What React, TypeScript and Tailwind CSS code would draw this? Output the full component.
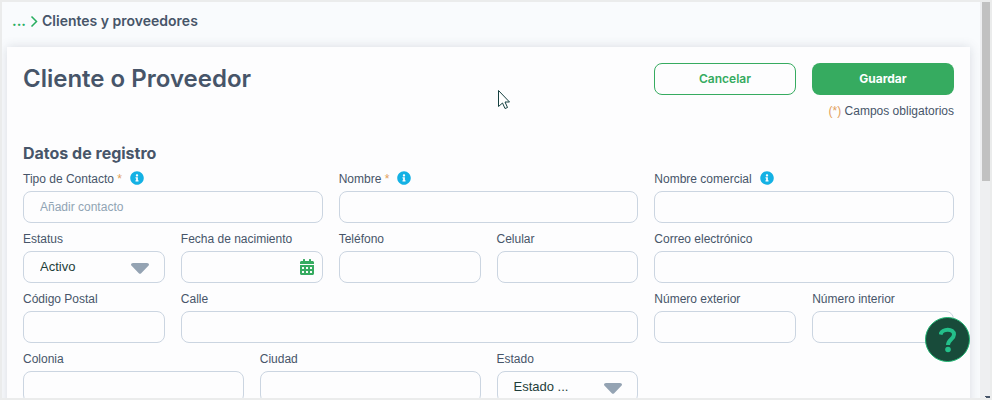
import type { ReactNode } from "react";
import { FaCalendarAlt, FaInfoCircle } from "react-icons/fa";

const heading = "font-['Inter',sans-serif] text-[#475569]";
const box =
  "h-8 w-full rounded-lg border border-[#cbd5e1] bg-transparent px-4 outline-none placeholder:text-[#90a4b4]";

type FieldProps = {
  id: string;
  label: string;
  span: string;
  required?: boolean;
  info?: boolean;
  children?: ReactNode;
};

function Field({ id, label, span, required, info, children }: FieldProps) {
  return (
    <div className={span}>
      <div className="flex h-6 items-center">
        <label htmlFor={id}>
          {label}
          {required && <span className="text-[#e2a05b]"> *</span>}
        </label>
        {info && <FaInfoCircle className="mb-0.5 ml-2 size-3.5 text-[#14b1e4]" />}
      </div>
      {children ?? <input id={id} type="text" className={box} />}
    </div>
  );
}

function Dropdown({ id, option }: { id: string; option: string }) {
  return (
    <div className="relative">
      <select id={id} className={`${box} block appearance-none text-[13px] text-[#1f3d3a]`}>
        <option>{option}</option>
      </select>
      <svg
        viewBox="0 0 18 11"
        className="pointer-events-none absolute top-3 right-4 h-[11px] w-[18px] fill-[#94a3b3]"
      >
        <path d="M2 0h14q2 0 2 1.5 0 .7-.6 1.300L10.200 10.200q-1.200 1.100-2.400 0L.6 2.800Q0 2.200 0 1.500 0 0 2 0z" />
      </svg>
    </div>
  );
}

export default function App() {
  return (
    <div className="relative flex h-screen overflow-hidden border-2 border-[#ebecec] bg-[#f9fbfd] font-['Liberation_Sans',Arial,sans-serif] text-xs text-[#475569]">
      <main className="min-w-0 flex-1 pr-2.5 pl-[5px]">
        <nav className={`${heading} flex h-[45px] items-center gap-1 px-[5px] pb-2 text-sm font-semibold`}>
          <a href="#inicio" className="font-bold text-[#27ae60]">
            ...
          </a>
          <svg viewBox="0 0 8 12" className="h-3 w-2 fill-none stroke-[#27ae60] stroke-[1.5]">
            <path d="M1.500 1.500 6.500 6.500 1.500 11.500" />
          </svg>
          <span>Clientes y proveedores</span>
        </nav>

        <form className="h-[600px] bg-[#fdfdfe] px-4 pt-4 shadow-[0_0_10px_rgba(71,85,105,0.18)]">
          <header className="flex items-start justify-between">
            <h1 className={`${heading} text-2xl font-semibold`}>Cliente o Proveedor</h1>
            <div>
              <div className="flex gap-4">
                <button
                  type="button"
                  className="h-8 w-[142px] rounded-lg border border-[#36ab60] font-['Inter',sans-serif] text-xs font-semibold text-[#36ab60]"
                >
                  Cancelar
                </button>
                <button
                  type="submit"
                  className="h-8 w-[142px] rounded-lg bg-[#36ab60] font-['Inter',sans-serif] text-xs font-bold text-white"
                >
                  Guardar
                </button>
              </div>
              <p className="mt-2 text-right">
                <span className="text-[#e2a05b]">(*)</span> Campos obligatorios
              </p>
            </div>
          </header>

          <h2 className={`${heading} mt-[22px] mb-0.5 text-base/6 font-bold`}>Datos de registro</h2>
          <div className="grid grid-cols-12 gap-x-4 gap-y-1">
            <Field id="tipo" label="Tipo de Contacto" span="col-span-4" required info>
              <input id="tipo" type="text" placeholder="Añadir contacto" className={box} />
            </Field>
            <Field id="nombre" label="Nombre" span="col-span-4" required info />
            <Field id="comercial" label="Nombre comercial" span="col-span-4" info />

            <Field id="estatus" label="Estatus" span="col-span-2">
              <Dropdown id="estatus" option="Activo" />
            </Field>
            <Field id="nacimiento" label="Fecha de nacimiento" span="col-span-2">
              <div className="relative">
                <input id="nacimiento" type="text" className={box} />
                <FaCalendarAlt className="pointer-events-none absolute top-2 right-2 size-4 text-[#36ab60]" />
              </div>
            </Field>
            <Field id="telefono" label="Teléfono" span="col-span-2" />
            <Field id="celular" label="Celular" span="col-span-2" />
            <Field id="correo" label="Correo electrónico" span="col-span-4" />

            <Field id="postal" label="Código Postal" span="col-span-2" />
            <Field id="calle" label="Calle" span="col-span-6" />
            <Field id="exterior" label="Número exterior" span="col-span-2" />
            <Field id="interior" label="Número interior" span="col-span-2" />

            <Field id="colonia" label="Colonia" span="col-span-3" />
            <Field id="ciudad" label="Ciudad" span="col-span-3" />
            <Field id="estado" label="Estado" span="col-span-2">
              <Dropdown id="estado" option="Estado ..." />
            </Field>
          </div>
        </form>
      </main>

      <div className="flex w-2.5 flex-col items-end justify-between bg-[#eeeff1] pl-0.5">
        <div className="h-[179px] w-full bg-[#c1c1c1]" />
        <svg viewBox="0 0 5 2" className="h-0.5 w-[5px] fill-[#475569]">
          <path d="M0 0h5v2H1V1H0z" />
        </svg>
      </div>

      <button
        type="button"
        aria-label="Ayuda"
        className="absolute right-5 bottom-9 flex size-[45px] items-center justify-center rounded-full border border-[#22b573] bg-[#184b3a]"
      >
        <svg viewBox="0 0 18 26" className="h-[26px] w-[18px] fill-none stroke-[#24c08a] stroke-[4]">
          <path d="M1.500 7.500C3 1 15 1 15 7.500 15 12 9 12.500 9 18" />
          <circle cx="9" cy="22.500" r="2.800" className="fill-[#24c08a] stroke-none" />
        </svg>
      </button>

      <svg
        viewBox="0 0 12 19"
        className="pointer-events-none absolute top-[88px] left-[496px] h-[19px] w-3 fill-white stroke-[#164040]"
      >
        <path d="M.5.5V16.500L4.500 13 7 18.500 9.500 17.500 7 12H11.500Z" />
      </svg>
    </div>
  );
}
